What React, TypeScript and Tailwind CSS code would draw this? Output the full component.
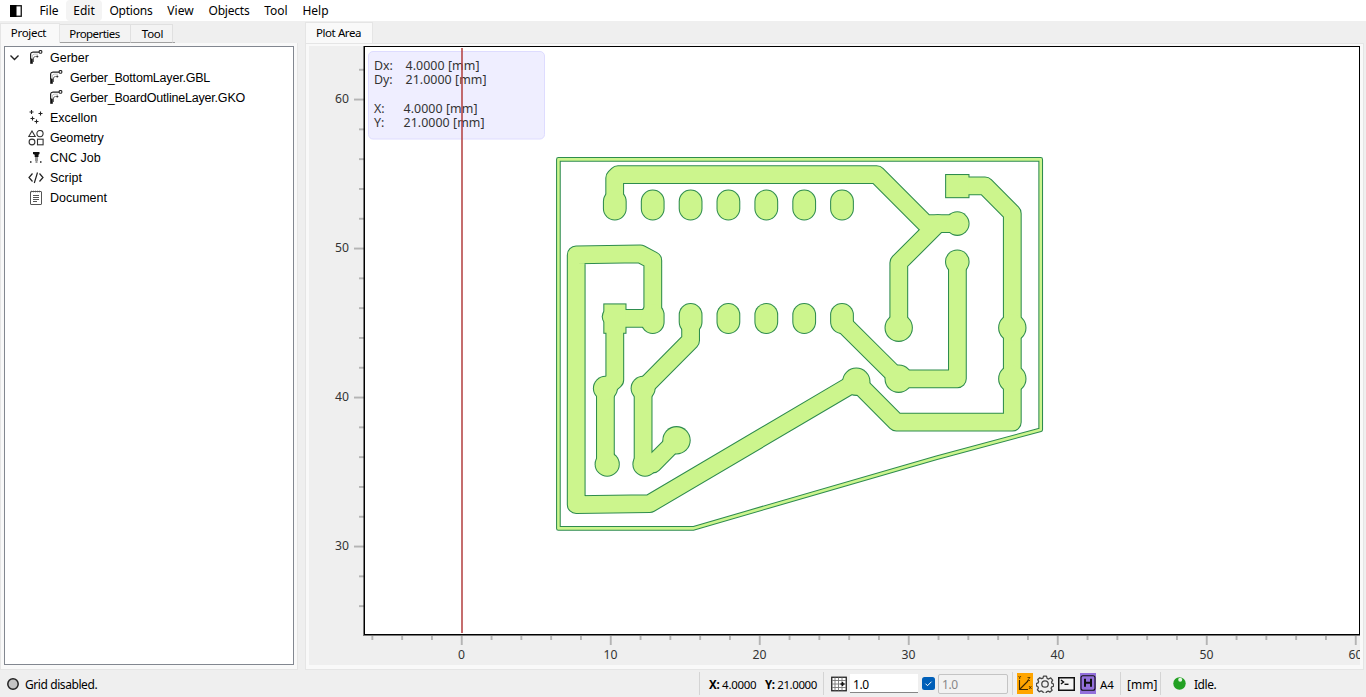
import React from "react";

const UI = "font-['Noto_Sans','Open_Sans',sans-serif]";

const menus = [
  { label: "File", cls: "w-[34px]" },
  { label: "Edit", cls: "w-[36px] rounded bg-[#f4f4f4]" },
  { label: "Options", cls: "w-[58px] tracking-[-0.2px]" },
  { label: "View", cls: "w-[41px]" },
  { label: "Objects", cls: "w-[56px] tracking-[-0.2px]" },
  { label: "Tool", cls: "w-[38px]" },
  { label: "Help", cls: "w-[41px]" },
];

const GerberIcon = () => (
  <svg width="16" height="16" viewBox="0 0 16 16" fill="none" stroke="#222">
    <path d="M2.600 9V4Q2.800 2.300 5 2.200H11" strokeWidth="1.200" />
    <path d="M3.500 8.500V13.800" strokeWidth="2.600" stroke="#111" />
    <path d="M5.500 12V8Q5.700 6.600 7.500 6.500H9.500" strokeWidth="1" stroke="#666" />
    <path d="M4.300 9V6Q4.600 4.300 6.500 4.200H10" strokeWidth=".7" stroke="#aaa" />
    <circle cx="12.500" cy="1.900" r="1.400" strokeWidth="1.100" />
    <path d="M8.800 5l1.800 1.500L8.800 8z" fill="#333" stroke="none" />
  </svg>
);
const ExcellonIcon = () => (
  <svg width="16" height="16" viewBox="0 0 16 16" stroke="#222" strokeWidth="1.100" fill="none">
    <path d="M3.500 0v4M1.500 2h4M12.500 1.500v4M10.500 3.500h4M4.500 6.500v4M2.500 8.500h4M8.500 9.500v4M6.500 11.500h4" />
  </svg>
);
const GeometryIcon = () => (
  <svg width="16" height="16" viewBox="0 0 16 16" stroke="#333" strokeWidth="1.100" fill="none">
    <path d="M4 1L7.200 6.500H.8Z" />
    <circle cx="12" cy="3.600" r="3.100" />
    <circle cx="4" cy="12" r="2.900" />
    <rect x="9.500" y="9.200" width="5.600" height="5.600" />
  </svg>
);
const CncIcon = () => (
  <svg width="16" height="16" viewBox="0 0 16 16">
    <path d="M5 2h6.500v2l-1 .8v2.200h-3.800V4.800L5 4z" fill="#111" />
    <path d="M7 8h3M7 10h3M7.500 12h2" stroke="#333" strokeWidth="1.200" />
    <path d="M2 11.200h1.500v1.500H2zM12 11.200h1.500v1.500H12z" fill="#222" />
  </svg>
);
const ScriptIcon = () => (
  <svg width="16" height="16" viewBox="0 0 16 16" stroke="#222" strokeWidth="1.200" fill="none">
    <path d="M4.500 3.500L1 7.500l3.500 4M11.500 3.500L15 7.500l-3.500 4M9.500 2.500L6.300 13" />
  </svg>
);
const DocumentIcon = () => (
  <svg width="16" height="16" viewBox="0 0 16 16" stroke="#555" fill="none">
    <rect x="2.500" y="1.500" width="11" height="13" rx=".5" />
    <path d="M3 1.500h10" strokeDasharray="1 1" strokeWidth="1.600" />
    <path d="M5 5.500h6M5 7.500h6M5 9.500h6M5 11.500h4" />
  </svg>
);

const rows = [
  { label: "Gerber", icon: <GerberIcon />, pad: "pl-[23px]" },
  { label: "Gerber_BottomLayer.GBL", icon: <GerberIcon />, pad: "pl-[43px] tracking-[-0.2px]" },
  { label: "Gerber_BoardOutlineLayer.GKO", icon: <GerberIcon />, pad: "pl-[43px] tracking-[-0.2px]" },
  { label: "Excellon", icon: <ExcellonIcon />, pad: "pl-[23px]" },
  { label: "Geometry", icon: <GeometryIcon />, pad: "pl-[23px] tracking-[-0.15px]" },
  { label: "CNC Job", icon: <CncIcon />, pad: "pl-[23px]" },
  { label: "Script", icon: <ScriptIcon />, pad: "pl-[23px]" },
  { label: "Document", icon: <DocumentIcon />, pad: "pl-[23px]" },
];

/* Board geometry, in window coordinates */
const traces = [
  "M614.700 205V178L618 174.700H876.700L925.600 223.600H957.300",
  "M937.900 223.600L898.800 262.700V327.700",
  "M957.300 185.900H985L1012.300 213.400V422.200H896.300L856.300 381.800L649.700 503.600L576.200 504.600V254.900L640.300 253.900L652.800 260.500V318.300H614.800V380L605.400 388.300V462L607 464.200",
  "M957.400 261.700V378.800H898.700L842 322.500",
  "M690.600 318.500V340.500L643.100 388.300V464H652.800L676.500 440.200",
];
const ovals = [
  [614.8, 205], [652.7, 205], [690.6, 205], [728.4, 205], [766.3, 205], [804.2, 205], [842, 205],
  [652.7, 318.5], [690.6, 318.5], [728.4, 318.5], [766.3, 318.5], [804.2, 318.5], [842, 318.5],
];
const circles = [
  [957.3, 223.6, 12.3], [957.3, 261.7, 12.3], [898.7, 327.7, 14.2], [1012.3, 327.7, 14.2],
  [1012.3, 378.8, 14.2], [898.7, 378.7, 14.2], [856.3, 381.7, 14.2], [676.5, 440.3, 14.2],
  [605.4, 388.3, 12.5], [643.1, 388.3, 12.5], [607.2, 464.2, 12.6], [645, 464.2, 12.6],
  [611, 316.7, 9.3],
];
const squares = [
  [945.1, 174, 24.4, 24.2],
  [603.3, 303.4, 23.2, 30.4],
];

const Copper = ({ color, inset }: { color: string; inset: number }) => (
  <g fill={color} stroke="none">
    <path
      d="M558.400 159.400H1040.700V429.800L936.700 457.700L693 528.400H558.400Z"
      fill="none" stroke={color} strokeWidth={4.7 - inset * 2} strokeLinejoin="round"
    />
    {traces.map((d) => (
      <path key={d} d={d} fill="none" stroke={color} strokeWidth={18.8 - inset * 2} strokeLinejoin="round" strokeLinecap="round" />
    ))}
    {ovals.map(([x, y]) => (
      <path key={`${x}-${y}`} d={`M${x} ${y - 3.6}v7.200`} stroke={color} strokeWidth={23.8 - inset * 2} strokeLinecap="round" />
    ))}
    {circles.map(([x, y, r]) => (
      <circle key={`${x}-${y}`} cx={x} cy={y} r={r - inset} />
    ))}
    {squares.map(([x, y, w, h]) => (
      <rect key={x} x={x + inset} y={y + inset} width={w - inset * 2} height={h - inset * 2} />
    ))}
  </g>
);

const xTicks = Array.from({ length: 34 }, (_, i) => i - 3);
const yTicks = Array.from({ length: 19 }, (_, i) => i + 13);

const Plot = () => (
  <svg width="1051" height="619" viewBox="309 46 1051 619" className="block bg-[#efefef]">
    {xTicks.map((n) => (
      <rect key={n} x={460.8 + n * 29.8} y={636} width="1.900" height={n % 5 === 0 ? 9 : 4} fill="#b4b4b4" />
    ))}
    {yTicks.map((n) => (
      <rect key={n} x={n % 5 === 0 ? 354 : 359} y={545.6 - (n - 15) * 29.8} width={n % 5 === 0 ? 10 : 5} height="1.900" fill="#b4b4b4" />
    ))}
    <g fontFamily="'Noto Sans','Open Sans',sans-serif" fontSize="12.200" fill="#333">
      {[0, 10, 20, 30, 40, 50, 60].map((v) => (
        <text key={v} x={461.5 + v * 14.9} y="659" textAnchor="middle">{v}</text>
      ))}
      {[30, 40, 50, 60].map((v) => (
        <text key={v} x="349" y={550 - (v - 30) * 14.9} textAnchor="end">{v}</text>
      ))}
    </g>
    <rect x="363.500" y="46" width="996.500" height="590" fill="#000" />
    <rect x="363" y="635" width="997" height="1" fill="#777" />
    <rect x="365" y="47" width="994" height="587" fill="#fff" />
    <Copper color="#2e8c4e" inset={0} />
    <Copper color="#ccf58d" inset={1.05} />
    <rect x="368.500" y="51.500" width="176" height="87.500" rx="4.500" fill="#efeeff" stroke="#dedcff" />
    <g fontFamily="'Noto Sans','Open Sans',sans-serif" fontSize="12.400" fill="#333">
      <text x="374" y="70">Dx:</text>
      <text x="405.500" y="70" textLength="74">4.0000 [mm]</text>
      <text x="374" y="84">Dy:</text>
      <text x="405.500" y="84" textLength="81">21.0000 [mm]</text>
      <text x="374" y="113">X:</text>
      <text x="403.500" y="113" textLength="74">4.0000 [mm]</text>
      <text x="374" y="127">Y:</text>
      <text x="403.500" y="127" textLength="81">21.0000 [mm]</text>
    </g>
    <rect x="461" y="48" width="2" height="585" fill="#b13c3c" fillOpacity=".75" />
  </svg>
);

const Sep = ({ cls }: { cls: string }) => <div className={`h-[23px] w-px shrink-0 bg-[#d4d4d4] ${cls}`} />;

export default function App() {
  return (
    <div className={`flex h-[697px] w-[1366px] flex-col overflow-hidden whitespace-nowrap bg-[#efefef] text-[12px] leading-[16px] text-black ${UI}`}>
      <header className="flex h-[21px] shrink-0 items-center bg-white">
        <svg width="12" height="12" viewBox="0 0 12 12" className="ml-[10px] mr-[10px] shrink-0">
          <rect x=".75" y=".75" width="10.500" height="10.500" fill="#fff" stroke="#111" strokeWidth="1.300" />
          <rect x="0" y="0" width="6.500" height="12" fill="#000" />
        </svg>
        {menus.map((m) => (
          <div key={m.label} className={`flex h-[21px] shrink-0 items-center justify-center ${m.cls}`}>{m.label}</div>
        ))}
      </header>

      <main className="flex h-[649px] shrink-0">
        <section className="flex w-[298px] shrink-0 flex-col pt-[2px]">
          <div className="flex h-[20px] items-end">
            <div className="flex h-[20px] w-[60px] shrink-0 items-center justify-center border-x border-t border-[#e5e5e5] bg-[#f9f9f9] pb-px pr-[3px] text-[11.500px] tracking-[-0.3px]">Project</div>
            <div className="flex h-[19px] w-[71px] shrink-0 items-center justify-center border-b border-r border-t border-b-[#a0a0a0] border-r-[#e0e0e0] border-t-[#e0e0e0] bg-[#f3f3f3] pr-[1px] text-[11.500px] tracking-[-0.55px]">Properties</div>
            <div className="flex h-[19px] w-[42px] shrink-0 items-center justify-center border-b border-r border-t border-b-[#a0a0a0] border-r-[#e0e0e0] border-t-[#e0e0e0] bg-[#f3f3f3] pl-[2px] text-[11.500px] tracking-[-0.3px]">Tool</div>
            <div className="h-px w-[2px] bg-[#a0a0a0]" />
          </div>
          <div className="h-[627px] border border-t-0 border-[#e5e5e5] bg-[#f9f9f9] px-[3px] pb-[4px] pt-[3px]">
            <div className="h-[619px] w-[290px] border border-[#828790] bg-white pt-[1px] font-['Liberation_Sans',Arial,sans-serif] text-[12.500px]">
              {rows.map((r, i) => (
                <div key={r.label} className={`flex h-[20px] items-center ${i === 0 ? "pl-[5px]" : r.pad}`}>
                  {i === 0 && (
                    <svg width="10" height="8" viewBox="0 0 10 8" className="mr-[8px] shrink-0" fill="none" stroke="#222" strokeWidth="1.400">
                      <path d="M.5 1.500L4.500 5.500L8.500 1.500" />
                    </svg>
                  )}
                  <span className="mr-[6px] shrink-0">{r.icon}</span>
                  <span>{r.label}</span>
                </div>
              ))}
            </div>
          </div>
        </section>

        <section className="ml-[7px] flex w-[1059px] shrink-0 flex-col pt-[1px]">
          <div className="h-[21px]">
            <div className="flex h-[22px] w-[68px] items-center justify-center border-x border-t border-[#e5e5e5] bg-[#f9f9f9] pb-px pr-[1px] text-[11.500px] tracking-[-0.4px]">Plot Area</div>
          </div>
          <div className="h-[627px] border border-[#e5e5e5] bg-[#f9f9f9] pl-[3px] pt-[2px]">
            <Plot />
          </div>
        </section>
      </main>

      <footer className="flex h-[27px] shrink-0 items-center">
        <svg width="12" height="12" viewBox="0 0 12 12" className="ml-[7px] shrink-0">
          <circle cx="6" cy="6" r="5.200" fill="#c4c4c4" stroke="#222" strokeWidth="1.500" />
        </svg>
        <span className="ml-[6px] w-[674px] shrink-0 pt-[2px] tracking-[-0.42px]">Grid disabled.</span>
        <Sep cls="" />
        <span className="ml-[9px] w-[56px] shrink-0 pt-[2px] text-[11.500px] tracking-[-0.28px]"><b>X:</b> 4.0000</span>
        <span className="w-[58px] shrink-0 pt-[2px] text-[11.500px] tracking-[-0.4px]"><b>Y:</b> 21.0000</span>
        <Sep cls="" />
        <svg width="16" height="16" viewBox="0 0 16 16" className="ml-[7px] shrink-0">
          <rect x=".75" y="1.250" width="14.500" height="13.500" fill="#fff" stroke="#222" strokeWidth="1.300" />
          <path d="M4 1.500v13M7.500 1.500v13M11 1.500v13M1 4.500h14M1 8h14M1 11.500h14" stroke="#777" strokeWidth=".9" />
          <path d="M11.500 6v4M9.500 8h4" stroke="#111" strokeWidth="1.500" />
        </svg>
        <div className="ml-[3px] flex h-[19px] w-[68px] shrink-0 items-center border-b border-[#868686] bg-white pl-[3px] pt-[3px] tracking-[-0.4px]">1.0</div>
        <svg width="13" height="13" viewBox="0 0 13 13" className="ml-[4px] shrink-0">
          <rect width="13" height="13" rx="2.500" fill="#005fb8" />
          <path d="M3.500 6.700l2 2L9.500 4.700" stroke="#fff" fill="none" />
        </svg>
        <div className="ml-[3px] flex h-[20px] w-[70px] shrink-0 items-center rounded-[2px] border border-[#c4c4c4] bg-[#f2f2f2] pl-[3px] pt-[2px] tracking-[-0.4px] text-[#888]">1.0</div>
        <Sep cls="ml-[4px]" />
        <svg width="16" height="21" viewBox="0 0 16 21" className="ml-[4px] shrink-0 bg-[#ffa500]" fill="none" stroke="#3c2800">
          <path d="M2.500 7V16.500H11M3 16L11 8" strokeWidth="1.100" />
          <path d="M1.500 3l1.200 1.500L4 3M2.700 4.500V6M10.500 4.500h2.500l-2.500 3h2.500M12 13l2.500 3M14.500 13L12 16" strokeWidth=".8" />
        </svg>
        <svg width="18" height="18" viewBox="0 0 24 24" className="ml-[3px] shrink-0" fill="none" stroke="#444" strokeWidth="1.700">
          <circle cx="12" cy="12" r="4.300" />
          <path d="M10 1.500h4l.8 3 2 .9 2.800-1.500 2.600 3-1.500 2.500.7 1.800 2 .8v3l-2.400.8-.8 2 1.300 2.500-2.800 2.500-2.400-1.300-2.200.9-.8 2.100h-3.300l-1-2.500-2.100-.8-2.500 1.200-2.500-2.700 1.300-2.400-.8-2-2-.8v-3l2.300-.9.8-2-1.200-2.500 2.700-2.500 2.300 1.300 2-.8z" strokeLinejoin="round" />
        </svg>
        <svg width="17" height="14" viewBox="0 0 17 14" className="ml-[4px] shrink-0" fill="none" stroke="#111">
          <rect x=".75" y=".75" width="15.500" height="12.500" strokeWidth="1.500" fill="#f3f3f3" />
          <path d="M3 3l2.500 2L3 7" strokeWidth="1.500" />
          <path d="M6.500 7.300h4" strokeWidth="1.400" />
        </svg>
        <svg width="16" height="21" viewBox="0 0 16 21" className="ml-[5px] shrink-0 bg-[#9370db]" fill="none" stroke="#111">
          <rect x="1" y="2.800" width="14" height="14.500" rx="2" strokeWidth="1.100" />
          <path d="M5 5.800v8M11 5.800v8M5 9.800h6" strokeWidth="2" />
        </svg>
        <span className="ml-[4px] w-[20px] shrink-0 pt-[2px] text-[11.500px]">A4</span>
        <Sep cls="" />
        <span className="ml-[6px] w-[33px] shrink-0 pt-[2px]">[mm]</span>
        <Sep cls="" />
        <svg width="13" height="13" viewBox="0 0 13 13" className="ml-[12px] shrink-0">
          <circle cx="6.500" cy="6.500" r="6.200" fill="#22a022" />
          <circle cx="7.200" cy="2.700" r="2" fill="#e4f5e4" />
        </svg>
        <span className="ml-[8px] pt-[2px] tracking-[-0.45px]">Idle.</span>
      </footer>
    </div>
  );
}
